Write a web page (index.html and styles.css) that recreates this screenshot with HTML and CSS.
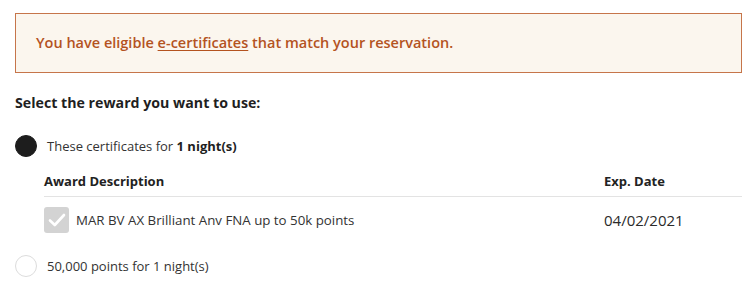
FILE: index.html
```html
<!DOCTYPE html>
<html lang="en">
<head>
    <meta charset="UTF-8">
    <meta name="viewport" content="width=device-width, initial-scale=1.0">
    <title>Rewards</title>
    <link rel="stylesheet" href="styles.css">
</head>
<body>
    <div class="page">
        <div class="alert">
            You have eligible <a href="#" class="alert-link">e-certificates</a> that match your reservation.
        </div>

        <h3 class="section-title">Select the reward you want to use:</h3>

        <div class="option">
            <span class="radio checked"></span>
            <span class="option-label">These certificates for <strong>1 night(s)</strong></span>
        </div>

        <div class="awards">
            <div class="awards-head">
                <div class="col-desc">Award Description</div>
                <div class="col-date">Exp. Date</div>
            </div>
            <div class="awards-row">
                <div class="col-desc">
                    <span class="checkbox">
                        <svg width="18" height="14" viewBox="0 0 18 14">
                            <path d="M2 7.5 L6.8 12 L16 2" fill="none" stroke="#fff" stroke-width="2.6" stroke-linecap="round" stroke-linejoin="round"/>
                        </svg>
                    </span>
                    <span>MAR BV AX Brilliant Anv FNA up to 50k points</span>
                </div>
                <div class="col-date date">04/02/2021</div>
            </div>
        </div>

        <div class="option">
            <span class="radio"></span>
            <span class="option-label">50,000 points for 1 night(s)</span>
        </div>
    </div>
</body>
</html>
```

FILE: styles.css
```css
body {
    margin: 0;
    font-family: "Open Sans", Lato, Arial, sans-serif;
    color: #2b2b2b;
    background: #fff;
}

.page {
    padding: 13px 9px 0 15px;
}

.alert {
    border: 1px solid #c6754a;
    background-color: #fbf6ee;
    color: #b4531f;
    font-size: 14.5px;
    font-weight: 600;
    height: 58px;
    line-height: 58px;
    padding: 0 20px;
}

.alert-link {
    color: #b4531f;
    text-decoration: underline;
    text-underline-offset: 2px;
}

.section-title {
    margin: 20px 0 0 0;
    font-size: 14.2px;
    font-weight: 700;
    color: #1f1f1f;
    line-height: 20px;
}

.option {
    display: flex;
    align-items: center;
    gap: 10px;
    margin-top: 22px;
    font-size: 13px;
    color: #333;
}

.option strong {
    font-weight: 700;
    color: #1f1f1f;
}

.radio {
    width: 20px;
    height: 20px;
    border-radius: 50%;
    border: 1px solid #dcdcdc;
    background: #fff;
}

.radio.checked {
    background: #1d1d1d;
    border-color: #1d1d1d;
}

.awards {
    margin: 15px 0 0 29px;
}

.awards-head {
    display: flex;
    font-size: 13px;
    font-weight: 700;
    color: #222;
    padding-bottom: 6px;
    border-bottom: 1px solid #e3e3e3;
}

.awards-row {
    display: flex;
    align-items: center;
    padding-top: 10px;
    font-size: 13.3px;
    color: #333;
}

.col-desc {
    flex: 1;
    display: flex;
    align-items: center;
    gap: 7px;
}

.col-date {
    width: 138px;
}

.date {
    font-size: 15px;
    color: #2a2a2a;
}

.checkbox {
    width: 25px;
    height: 26px;
    border-radius: 3px;
    background: #d3d3d3;
    display: flex;
    align-items: center;
    justify-content: center;
}

.awards + .option {
    margin-top: 22px;
}
```
